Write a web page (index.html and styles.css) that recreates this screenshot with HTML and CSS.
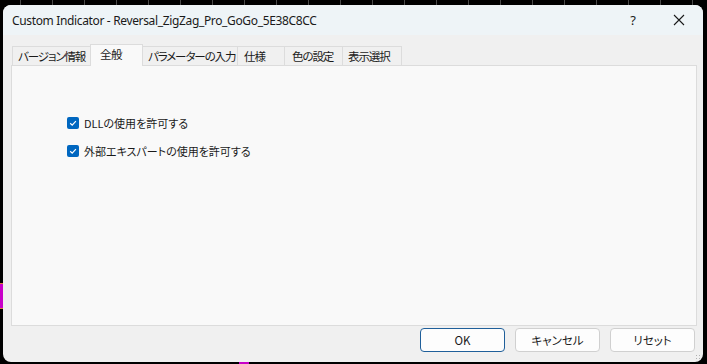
FILE: index.html
```html
<!DOCTYPE html>
<html lang="ja">
<head>
    <meta charset="UTF-8">
    <title>Custom Indicator</title>
    <link rel="stylesheet" href="styles.css">
</head>
<body>

	<div class="marker marker-left"></div>
	<div class="marker marker-bottom"></div>

	<div class="window">
		<div class="titlebar">
			<span class="title">Custom Indicator - Reversal_ZigZag_Pro_GoGo_5E38C8CC</span>
			<span class="help">?</span>
			<span class="close">
				<svg width="12" height="12" viewBox="0 0 12 12"><path d="M1 1 L11 11 M11 1 L1 11" stroke="#1a1a1a" stroke-width="1.1" fill="none"/></svg>
			</span>
		</div>

		<div class="content">
			<div class="tabs">
				<div class="tab tab-version">バージョン情報</div>
				<div class="tab tab-general active">全般</div>
				<div class="tab tab-params">パラメーターの入力</div>
				<div class="tab tab-spec">仕様</div>
				<div class="tab tab-colors">色の設定</div>
				<div class="tab tab-view">表示選択</div>
			</div>

			<div class="panel">
				<label class="check-row">
					<span class="checkbox">
						<svg width="12" height="12" viewBox="0 0 12 12"><path d="M3.2 6.2 L5.2 8.1 L8.9 4.2" stroke="#fff" stroke-width="1.2" fill="none"/></svg>
					</span>
					DLLの使用を許可する
				</label>
				<label class="check-row">
					<span class="checkbox">
						<svg width="12" height="12" viewBox="0 0 12 12"><path d="M3.2 6.2 L5.2 8.1 L8.9 4.2" stroke="#fff" stroke-width="1.2" fill="none"/></svg>
					</span>
					外部エキスパートの使用を許可する
				</label>
			</div>

			<div class="buttons">
				<button class="btn default">OK</button>
				<button class="btn">キャンセル</button>
				<button class="btn">リセット</button>
			</div>
		</div>
		<div class="grip"></div>
	</div>

</body>
</html>
```

FILE: styles.css
```css
body {
	margin: 0;
	width: 707px;
	height: 364px;
	overflow: hidden;
	background-color: #000;
	background-image: repeating-linear-gradient(90deg, transparent 0, transparent 20px, #4a4a4a 20px, #4a4a4a 21px, transparent 21px, transparent 32px);
	background-size: 100% 5px;
	background-repeat: no-repeat;
	font-family: "Noto Sans CJK JP", sans-serif;
	font-feature-settings: "palt";
	font-size: 11px;
	color: #1a1a1a;
	position: relative;
}

.marker {
	position: absolute;
	background-color: #c800c8;
}

.marker-left {
	left: 0;
	top: 283px;
	width: 3px;
	height: 24px;
	border-top: 1px solid #e08040;
	border-bottom: 1px solid #e08040;
}

.marker-bottom {
	left: 239px;
	top: 362px;
	width: 10px;
	height: 2px;
}

.window {
	margin: 5px 0 0 3px;
	width: 700px;
	height: 357px;
	background-color: #f0f0f0;
	border-radius: 8px;
	display: flex;
	flex-direction: column;
	overflow: hidden;
	position: relative;
}

.titlebar {
	height: 30px;
	background-color: #eef4f7;
	display: flex;
	align-items: center;
	padding-left: 9px;
	flex-shrink: 0;
}

.title {
	font-family: "Noto Sans", sans-serif;
	font-size: 12px;
	flex: 1;
	letter-spacing: -0.35px;
}

.help {
	font-family: "Noto Sans", sans-serif;
	font-size: 13px;
	width: 46px;
	text-align: center;
}

.close {
	width: 46px;
	display: flex;
	justify-content: center;
	margin-right: 1px;
}

.content {
	flex: 1;
	display: flex;
	flex-direction: column;
	padding: 9px 6px 0 8px;
}

.tabs {
	display: flex;
	align-items: flex-end;
	height: 22px;
	padding-left: 1px;
}

.tab {
	box-sizing: border-box;
	height: 20px;
	line-height: 18px;
	padding: 0 0 0 5px;
	background-color: #f0f0f0;
	border: 1px solid #dcdcdc;
	border-bottom: none;
	margin-right: -1px;
	white-space: nowrap;
	overflow: hidden;
	font-size: 11.5px;
	letter-spacing: -1.1px;
}

.tab.active {
	height: 22px;
	line-height: 19px;
	background-color: #f9f9f9;
	padding-left: 9px;
	position: relative;
	z-index: 1;
	letter-spacing: -0.5px;
}

.tab-version { width: 79px; }
.tab-general { width: 53px; }
.tab-params { width: 96px; }
.tab-spec { width: 48px; padding-left: 6px; }
.tab-colors { width: 59px; padding-left: 7px; }
.tab-view { width: 60px; }

.panel {
	height: 261px;
	margin-top: -1px;
	background-color: #f9f9f9;
	border: 1px solid #dcdcdc;
	padding: 48px 0 0 55px;
	box-sizing: border-box;
	display: flex;
	flex-direction: column;
	gap: 10px;
}

.check-row {
	display: flex;
	align-items: center;
	gap: 5px;
	height: 18px;
}

.checkbox {
	width: 12px;
	height: 12px;
	border-radius: 2px;
	background-color: #0067c0;
	display: flex;
}

.buttons {
	display: flex;
	justify-content: flex-end;
	gap: 10px;
	padding-top: 2px;
	padding-right: 2px;
}

.btn {
	width: 85px;
	height: 24px;
	font-family: "Noto Sans CJK JP", sans-serif;
	font-feature-settings: "palt";
	font-size: 11.5px;
	color: #1a1a1a;
	background-color: #fdfdfd;
	border: 1px solid #d0d0d0;
	border-radius: 4px;
	padding: 0;
}

.btn.default {
	border-color: #1f5f9a;
}

.grip {
	position: absolute;
	right: 1px;
	bottom: 1px;
	width: 7px;
	height: 7px;
	background-image: radial-gradient(#b0b0b0 0.8px, transparent 1px);
	background-size: 3px 3px;
}
```
